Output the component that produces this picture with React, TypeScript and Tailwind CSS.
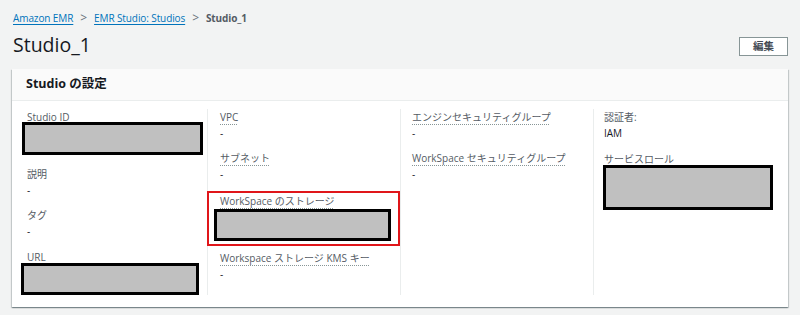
import React from "react";

const FONT = { fontFamily: '"Open Sans", "Noto Sans CJK JP", sans-serif' };

function Label({ children, u = false }: { children: React.ReactNode; u?: boolean }) {
  return (
    <span
      className={
        u
          ? "self-start text-[10px] leading-4 text-[#545b64] underline decoration-dotted decoration-[#879596] underline-offset-[3px] whitespace-nowrap"
          : "self-start text-[10px] leading-4 text-[#545b64] whitespace-nowrap"
      }
    >
      {children}
    </span>
  );
}

function Value({ children }: { children: React.ReactNode }) {
  return <span className="text-[10px] leading-4 text-[#16191f]">{children}</span>;
}

export default function App() {
  return (
    <div className="w-[800px] h-[315px] bg-[#f2f3f3] overflow-hidden" style={FONT}>
      {/* Breadcrumb */}
      <div className="mt-[10px] pl-[13px] h-4 flex items-center gap-[7px] text-[10px] tracking-[-0.1px] leading-4">
        <span className="text-[#0073bb] underline underline-offset-2">Amazon EMR</span>
        <span className="text-[#687078] text-[12px]">&gt;</span>
        <span className="text-[#0073bb] underline underline-offset-2">EMR Studio: Studios</span>
        <span className="text-[#687078] text-[12px]">&gt;</span>
        <span className="text-[#545b64] font-bold">Studio_1</span>
      </div>

      {/* Title row */}
      <div className="mt-[5px] flex items-start justify-between pl-[13px] pr-[12px] h-[28px]">
        <h1 className="text-[19.5px] leading-[28px] text-[#16191f]">Studio_1</h1>
        <button className="mt-[6px] w-[49px] h-[19px] border border-[#879596] bg-white text-[10.5px] font-bold text-[#444b54] leading-none">
          編集
        </button>
      </div>

      {/* Card */}
      <div className="mt-[10px] ml-[12px] w-[776px] bg-white shadow-[0_1px_1px_0_rgba(0,28,36,0.3),1px_1px_1px_0_rgba(0,28,36,0.15),-1px_1px_1px_0_rgba(0,28,36,0.15)]">
        <div className="h-[32px] bg-[#fafafa] border-b border-[#eaeded] pl-[14px] flex items-center">
          <span className="text-[12.5px] font-bold text-[#16191f]">Studio の設定</span>
        </div>
        <div className="pt-[8px] pb-[12px] pl-px grid grid-cols-[194px_193px_193px_194px]">
          {/* Col 1 */}
          <div className="flex flex-col pl-[14px]">
            <Label>Studio ID</Label>
            <div className="mt-[-3px] ml-[-5px] w-[181px] h-[33px] border-[3px] border-black bg-[#c0c0c0]" />
            <div className="mt-[11px] flex flex-col">
              <Label>説明</Label>
              <Value>-</Value>
            </div>
            <div className="mt-[9px] flex flex-col">
              <Label>タグ</Label>
              <Value>-</Value>
            </div>
            <div className="mt-[10px] flex flex-col">
              <Label>URL</Label>
              <div className="mt-[-2px] ml-[-6px] w-[178px] h-[32px] border-[3px] border-black bg-[#c0c0c0]" />
            </div>
          </div>

          {/* Col 2 */}
          <div className="flex flex-col border-l border-[#eaeded]">
            <div className="flex flex-col pl-[12px]">
              <Label u>VPC</Label>
              <Value>-</Value>
            </div>
            <div className="mt-[9px] flex flex-col pl-[12px]">
              <Label u>サブネット</Label>
              <Value>-</Value>
            </div>
            <div className="mt-[9px] ml-[-1px] w-[193px] h-[55px] border-2 border-[#e0161a] flex flex-col pl-[11px]">
              <Label u>WorkSpace のストレージ</Label>
              <div className="ml-[-6px] w-[177px] h-[32px] border-[3px] border-black bg-[#c0c0c0]" />
            </div>
            <div className="mt-[4px] flex flex-col pl-[12px]">
              <Label u>Workspace ストレージ KMS キー</Label>
              <Value>-</Value>
            </div>
          </div>

          {/* Col 3 */}
          <div className="flex flex-col border-l border-[#eaeded] pl-[11px]">
            <div className="flex flex-col">
              <Label u>エンジンセキュリティグループ</Label>
              <Value>-</Value>
            </div>
            <div className="mt-[9px] flex flex-col">
              <Label u>WorkSpace セキュリティグループ</Label>
              <Value>-</Value>
            </div>
          </div>

          {/* Col 4 */}
          <div className="flex flex-col border-l border-[#eaeded] pl-[10px]">
            <div className="flex flex-col">
              <Label>認証者:</Label>
              <Value>IAM</Value>
            </div>
            <div className="mt-[10px] flex flex-col">
              <Label>サービスロール</Label>
              <div className="mt-[-2px] ml-[-1px] w-[170px] h-[45px] border-[3px] border-black bg-[#c0c0c0]" />
            </div>
          </div>
        </div>
      </div>
    </div>
  );
}
